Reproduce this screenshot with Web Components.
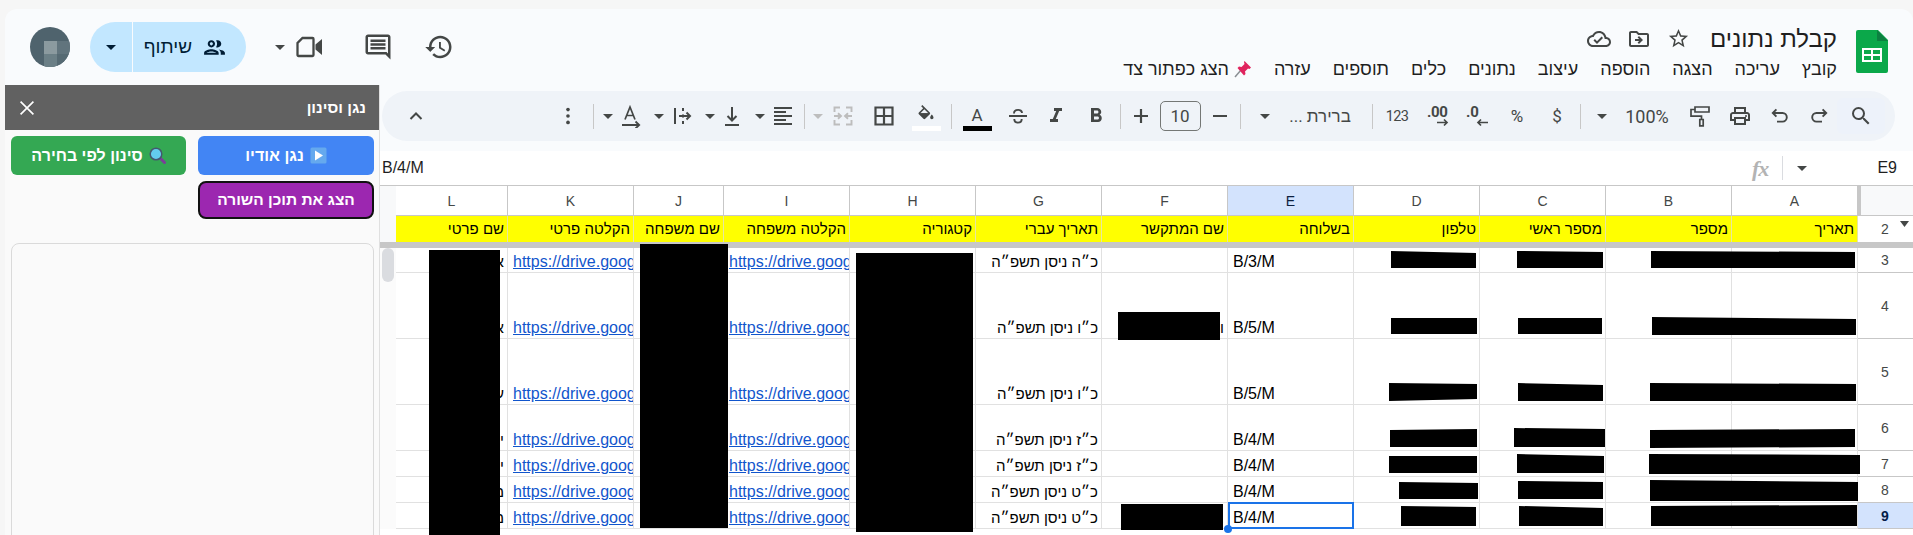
<!DOCTYPE html>
<html lang="he">
<head>
<meta charset="utf-8">
<title>קבלת נתונים</title>
<style>
    html, body { margin: 0; height: 535px; overflow: hidden; }
    body {
        position: relative;
        background: #f6f6f6;
        padding: 9px 0 0 5px;
        box-sizing: border-box;
        font-family: "Liberation Sans", Arial, sans-serif;
    }
</style>
</head>
<body>
<sheets-app></sheets-app>
<div id="marks"></div>

<script>
const svg = (size, inner, color = "#444746", vb = "0 0 24 24") =>
    `<svg width="${size}" height="${size}" viewBox="${vb}" fill="${color}" style="display:block">${inner}</svg>`;
const p = d => `<path d="${d}"/>`;
const line = (d, w = 1.9) => `<path d="${d}" fill="none" stroke="currentColor" stroke-width="${w}"/>`;

const ICONS = {
    search: p("M15.5 14h-.79l-.28-.27A6.471 6.471 0 0 0 16 9.5 6.5 6.5 0 1 0 9.5 16c1.61 0 3.09-.59 4.23-1.57l.27.28v.79l5 4.99L20.49 19l-4.99-5zm-6 0C7.01 14 5 11.99 5 9.5S7.01 5 9.5 5 14 7.01 14 9.5 11.99 14 9.5 14z"),
    redo: line("M19 9H9.5a4.3 4.3 0 0 0 0 8.6H15M15.6 5.4 19.2 9l-3.6 3.6"),
    undo: line("M5 9h9.5a4.3 4.3 0 0 1 0 8.6H9M8.4 5.4 4.8 9l3.6 3.6"),
    print: p("M19 8h-1V3H6v5H5c-1.66 0-3 1.34-3 3v6h4v4h12v-4h4v-6c0-1.66-1.34-3-3-3zM8 5h8v3H8V5zm8 14H8v-4h8v4zm2-4v-2H6v2H4v-4c0-.55.45-1 1-1h14c.55 0 1 .45 1 1v4h-2z") + `<circle cx="18" cy="12" r="1"/>`,
    paint: line("M7 3h14v5H7zM7 5.5H3v6.7h10.5v3.3M11.8 15.5h3.4v6.3h-3.4z", 1.7),
    strike: line("M3 12h18M8 9.5C8 4.8 16 4.8 16 9M8.3 15c0 4.8 7.4 4.8 7.4 0"),
    italic: p("M10 4v3h2.21l-3.42 8H6v3h8v-3h-2.21l3.42-8H18V4z"),
    bold: p("M15.6 10.79c.97-.67 1.65-1.77 1.65-2.79 0-2.26-1.75-4-4-4H7v14h7.04c2.09 0 3.71-1.7 3.71-3.79 0-1.52-.86-2.82-2.15-3.42zM10 6.5h3c.83 0 1.5.67 1.5 1.5s-.67 1.5-1.5 1.5h-3v-3zm3.5 9H10v-3h3.5c.83 0 1.5.67 1.5 1.5s-.67 1.5-1.5 1.5z"),
    plus: line("M12 5v14M5 12h14", 2.2),
    minus: line("M5 12h14", 2.2),
    fill: p("M16.56 8.94 7.62 0 6.21 1.41l2.38 2.38-5.15 5.15c-.59.59-.59 1.54 0 2.12l5.5 5.5c.29.29.68.44 1.06.44s.77-.15 1.06-.44l5.5-5.5c.59-.58.59-1.53 0-2.12zM5.21 10 10 5.21 14.79 10H5.21zM19 11.5s-2 2.17-2 3.5c0 1.1.9 2 2 2s2-.9 2-2c0-1.33-2-3.5-2-3.5z") + p("M4.5 10h11l-5.5 6z"),
    borders: line("M3.5 3.5h17v17h-17zM12 3.5v17M3.5 12h17", 2.2),
    merge: line("M3.5 8V3.5H9M15 3.5h5.5V8M3.5 16v4.5H9M15 20.5h5.5V16M3 12h6.5M7 9.2 10 12l-3 2.8M21 12h-6.5M17 9.2 14 12l3 2.8"),
    align: line("M3 4h18M3 8h12M3 12h18M3 16h12M3 20h18", 1.8),
    valign: line("M5 21h14M12 3v13M7.5 12 12 16.5l4.5-4.5", 2),
    wrap: line("M5 4v16M13 4v3M13 10.5v3M13 17v3M9 12h11M16.5 8.5 20 12l-3.5 3.5", 2),
    rotate: line("M3 21h17M16.5 17.5 20.2 21l-3.7 3.5", 1.8) + line("M6 15.5 11 3l5 12.5M7.6 11.5h6.8", 1.7),
    chevron: line("M6.5 15 12 9.5l5.5 5.5", 2),
    dots: `<circle cx="12" cy="5" r="2"/><circle cx="12" cy="12" r="2"/><circle cx="12" cy="19" r="2"/>`,
    comment: p("M21.99 4c0-1.1-.89-2-1.99-2H4c-1.1 0-2 .9-2 2v12c0 1.1.9 2 2 2h14l4 4-.01-18zM20 4v13.17L18.83 16H4V4h16zM6 12h12v2H6zm0-3h12v2H6zm0-3h12v2H6z"),
    history: p("M13 3c-4.97 0-9 4.03-9 9H1l3.89 3.89.07.14L9 12H6c0-3.87 3.13-7 7-7s7 3.13 7 7-3.13 7-7 7c-1.93 0-3.68-.79-4.94-2.06l-1.42 1.42C8.27 19.99 10.51 21 13 21c4.97 0 9-4.03 9-9s-4.03-9-9-9zm-1 5v5l4.28 2.54.72-1.21-3.5-2.08V8H12z"),
    people: p("M9 13.75c-2.34 0-7 1.17-7 3.5V19h14v-1.75c0-2.33-4.66-3.5-7-3.5zM4.34 17c.84-.58 2.87-1.25 4.66-1.25s3.82.67 4.66 1.25H4.34zM9 12c1.93 0 3.5-1.57 3.5-3.5S10.93 5 9 5 5.5 6.57 5.5 8.5 7.07 12 9 12zm0-5c.83 0 1.5.67 1.5 1.5S9.83 10 9 10s-1.5-.67-1.5-1.5S8.17 7 9 7zm7.04 6.81c1.16.84 1.96 1.96 1.96 3.44V19h4v-1.75c0-2.02-3.5-3.17-5.96-3.44zM15 12c1.93 0 3.5-1.57 3.5-3.5S16.93 5 15 5c-.54 0-1.04.13-1.5.35.63.89 1 1.98 1 3.15s-.37 2.26-1 3.15c.46.22.96.35 1.5.35z"),
    star: p("M22 9.24l-7.19-.62L12 2 9.19 8.63 2 9.24l5.46 4.73L5.82 21 12 17.27 18.18 21l-1.63-7.03L22 9.24zM12 15.4l-3.76 2.27 1-4.28-3.32-2.88 4.38-.38L12 6.1l1.71 4.04 4.38.38-3.32 2.88 1 4.28L12 15.4z"),
    move: p("M20 6h-8l-2-2H4c-1.1 0-1.99.9-1.99 2L2 18c0 1.1.9 2 2 2h16c1.1 0 2-.9 2-2V8c0-1.1-.9-2-2-2zm0 12H4V6h5.17l2 2H20v10zm-8.01-9-1.41 1.41L12.16 12H8v2h4.16l-1.59 1.59L11.99 17 16 13.01 11.99 9z"),
    cloud: p("M19.35 10.04C18.67 6.59 15.64 4 12 4 9.11 4 6.6 5.64 5.35 8.04 2.34 8.36 0 10.91 0 14c0 3.31 2.69 6 6 6h13c2.76 0 5-2.24 5-5 0-2.64-2.05-4.78-4.65-4.96zM19 18H6c-2.21 0-4-1.79-4-4 0-2.05 1.53-3.76 3.56-3.97l1.07-.11.5-.95C8.08 7.14 9.94 6 12 6c2.62 0 4.88 1.86 5.39 4.43l.3 1.5 1.53.11c1.56.1 2.78 1.41 2.78 2.96 0 1.65-1.35 3-3 3zm-9-3.82-2.09-2.09L6.5 13.5 10 17l6.01-6.01-1.41-1.41z"),
    close: line("M5 5l14 14M19 5 5 19", 1.8)
};

const CARET = `<svg width="10" height="5" viewBox="0 0 10 5" style="display:block"><path d="M0 0h10L5 5z" fill="currentColor"/></svg>`;

class SheetsApp extends HTMLElement {
    constructor() {
        super();
        this.attachShadow({ mode: "open" });
    }

    connectedCallback() {
        this.shadowRoot.innerHTML = `
        <style>
            :host {
                display: block;
                height: 526px;
                background: #f9fbfd;
                border-radius: 12px 12px 0 0;
                overflow: hidden;
            }
            .body { display: flex; }
            .main { flex: 1; min-width: 0; }
        </style>
        <app-header></app-header>
        <div class="body">
            <side-panel></side-panel>
            <div class="main">
                <sheet-toolbar></sheet-toolbar>
                <formula-bar></formula-bar>
                <sheet-grid></sheet-grid>
            </div>
        </div>`;
    }
}
customElements.define("sheets-app", SheetsApp);

class AppHeader extends HTMLElement {
    constructor() {
        super();
        this.attachShadow({ mode: "open" });
    }

    connectedCallback() {
        const menu = ["קובץ", "עריכה", "הצגה", "הוספה", "עיצוב", "נתונים", "כלים", "תוספים", "עזרה"];
        this.shadowRoot.innerHTML = `
        <style>
            :host {
                display: flex;
                justify-content: space-between;
                height: 76px;
                color: #444746;
            }
            .actions { display: flex; align-items: center; padding: 0 0 0 25px; height: 78px; margin-top: -1px; }
            .avatar { display: block; width: 40px; height: 40px; }
            .share {
                display: flex;
                align-items: center;
                height: 50px;
                width: 156px;
                margin-left: 20px;
                border-radius: 25px;
                background: #c2e7ff;
                color: #001d35;
                overflow: hidden;
            }
            .share .drop { width: 42px; height: 100%; display: flex; align-items: center; justify-content: center; border-right: 1px solid #f9fbfd; }
            .share .main { flex: 1; display: flex; align-items: center; justify-content: flex-end; gap: 10px; padding-right: 19px; font-size: 19px; }
            .meet { display: flex; align-items: center; margin-left: 29px; gap: 10px; }
            .comment { margin-left: 40px; }
            .history { margin-left: 31px; }
            .doc { display: flex; padding: 21px 25px 0 0; gap: 19px; }
            .info { display: flex; flex-direction: column; align-items: flex-end; }
            .title-row { display: flex; align-items: center; gap: 20px; height: 24px; margin-top: -3px; }
            .title { font-size: 24px; color: #1f1f1f; line-height: 24px; }
            .title-icons { display: flex; gap: 16px; }
            .menu { display: flex; flex-direction: row-reverse; gap: 22px; font-size: 18px; line-height: 20px; color: #1f1f1f; margin-top: 8px; }
            .menu span { white-space: nowrap; }
            .pinned { display: flex; gap: 5px; align-items: center; }
        </style>
        <div class="actions">
            <svg class="avatar" viewBox="0 0 40 40">
                <clipPath id="av"><circle cx="20" cy="20" r="20"/></clipPath>
                <g clip-path="url(#av)">
                    <rect width="40" height="40" fill="#4f636d"/>
                    <rect x="14" y="14" width="13" height="13" fill="#8b9a9f"/>
                    <rect x="27" y="14" width="13" height="13" fill="#61747d"/>
                    <rect x="14" y="27" width="13" height="13" fill="#6b7f86"/>
                    <rect x="27" y="27" width="13" height="13" fill="#566a73"/>
                </g>
            </svg>
            <div class="share" dir="ltr">
                <div class="drop">${CARET}</div>
                <div class="main"><span dir="rtl">שיתוף</span>${svg(25, ICONS.people, "#001d35")}</div>
            </div>
            <div class="meet">
                ${CARET}
                <svg width="28" height="22" viewBox="0 0 27 22" fill="none" style="display:block">
                    <path d="M7 2h10a1 1 0 0 1 1 1v16a1 1 0 0 1-1 1H3a1 1 0 0 1-1-1V7z" stroke="#444746" stroke-width="2.3"/>
                    <path d="M20 8.5 26.5 3v16L20 13.5z" fill="#444746"/>
                </svg>
            </div>
            <div class="comment">${svg(30, ICONS.comment)}</div>
            <div class="history">${svg(30, ICONS.history)}</div>
        </div>
        <div class="doc">
            <div class="info">
                <div class="title-row">
                    <div class="title-icons">${svg(24, ICONS.cloud)}${svg(24, ICONS.move)}${svg(23, ICONS.star)}</div>
                    <span class="title" dir="rtl">קבלת נתונים</span>
                </div>
                <div class="menu">
                    ${menu.map(m => `<span>${m}</span>`).join("")}
                    <span class="pinned" dir="rtl">
                        <svg width="18" height="18" viewBox="0 0 18 18" style="display:block">
                            <path d="M1 17 7 10" stroke="#8a8f94" stroke-width="1.5"/>
                            <path d="M10.5 1 17 7.5 15.5 9 14 8.5 11 11.5 11.5 14 10 15.5 3.5 8 5 6.5 7.5 7 10.5 4 10 2z" fill="#e0245e"/>
                        </svg>
                        <span>הצג כפתור צד</span>
                    </span>
                </div>
            </div>
            <svg width="32" height="43" viewBox="0 0 32 43" style="display:block">
                <path d="M2 0h20l10 10v31a2 2 0 0 1-2 2H2a2 2 0 0 1-2-2V2a2 2 0 0 1 2-2z" fill="#0ba84a"/>
                <path d="M21 0l11 11H21z" fill="#0c8040"/>
                <path d="M6 18h20v14H6z" fill="#fff"/>
                <path d="M8 20h7v4H8zM17 20h7v4h-7zM8 26h7v4H8zM17 26h7v4h-7z" fill="#0ba84a"/>
            </svg>
        </div>`;
    }
}
customElements.define("app-header", AppHeader);

class SidePanel extends HTMLElement {
    constructor() {
        super();
        this.attachShadow({ mode: "open" });
    }

    connectedCallback() {
        this.shadowRoot.innerHTML = `
        <style>
            :host {
                display: flex;
                flex-direction: column;
                flex: none;
                width: 375px;
                height: 450px;
                background: #fafafa;
                border-right: 1px solid #e0e0e0;
                box-sizing: border-box;
                overflow: hidden;
            }
            .bar {
                display: flex;
                justify-content: space-between;
                align-items: center;
                height: 45px;
                flex: none;
                padding: 0 13px 0 11px;
                background: #616161;
                color: #fff;
                font-size: 15.5px;
                font-weight: bold;
            }
            .buttons {
                display: grid;
                grid-template-columns: 175px 176px;
                column-gap: 12px;
                row-gap: 6px;
                padding: 6px 5px 0 6px;
                flex: none;
            }
            button {
                display: flex;
                align-items: center;
                justify-content: center;
                gap: 6px;
                height: 39px;
                padding: 0;
                border: 0;
                border-radius: 6px;
                color: #fff;
                font: bold 16px "Liberation Sans", Arial, sans-serif;
            }
            .blue { background: #4285f4; }
            .green { background: #34a853; }
            .purple {
                grid-column: 2;
                height: 38px;
                background: #9c27b0;
                border: 2px solid #111;
                border-radius: 8px;
                box-sizing: border-box;
                font-size: 15.5px;
            }
            .box {
                flex: 1;
                margin: 24px 5px 0 6px;
                background: #fafafa;
                border: 1px solid #dadada;
                border-radius: 8px;
                min-height: 320px;
            }
        </style>
        <div class="bar">
            ${svg(22, ICONS.close, "#fff")}
            <span dir="rtl">נגן וסינון</span>
        </div>
        <div class="buttons">
            <button class="green" dir="rtl">
                <svg width="17" height="17" viewBox="0 0 17 17" style="display:block">
                    <path d="M10.5 10.5 15.5 15.5" stroke="#7b3f98" stroke-width="3" stroke-linecap="round"/>
                    <circle cx="7" cy="7" r="5.8" fill="#63cdee" stroke="#44596e" stroke-width="1.5"/>
                </svg>
                <span>סינון לפי בחירה</span>
            </button>
            <button class="blue" dir="rtl">
                <svg width="17" height="17" viewBox="0 0 17 17" style="display:block">
                    <rect x=".5" y=".5" width="16" height="16" rx="1.5" fill="#65a9ee"/>
                    <path d="M5 3.5 13 8.5 5 13.5z" fill="#fff"/>
                </svg>
                <span>נגן אודיו</span>
            </button>
            <button class="purple" dir="rtl"><span>הצג את תוכן השורה</span></button>
        </div>
        <div class="box"></div>`;
    }
}
customElements.define("side-panel", SidePanel);

class SheetToolbar extends HTMLElement {
    constructor() {
        super();
        this.attachShadow({ mode: "open" });
    }

    connectedCallback() {
        const sep = `<i class="sep"></i>`;
        const caret = CARET;
        const ic = (name, size = 24) => svg(size, ICONS[name], "currentColor");
        // centre of each control along the bar, left to right
        const items = [
            [568, 24, ic("dots", 22)],
            [593, 1, sep], [608, 10, caret],
            [631, 24, ic("rotate")], [659, 10, caret],
            [682, 24, ic("wrap")], [710, 10, caret],
            [732, 24, ic("valign")], [760, 10, caret],
            [783, 24, ic("align")], [804.5, 1, sep],
            [817.5, 10, `<span class="off">${caret}</span>`],
            [843, 24, `<span class="off">${ic("merge")}</span>`],
            [884, 24, ic("borders")],
            [926, 29, `<div class="swatch">${ic("fill", 20)}<b style="background:#fff"></b></div>`],
            [951, 1, sep],
            [977, 29, `<div class="swatch"><span class="a">A</span><b style="background:#000"></b></div>`],
            [1017.5, 24, ic("strike")], [1056, 24, ic("italic")], [1095.5, 24, ic("bold")],
            [1120, 1, sep], [1141, 24, ic("plus")],
            [1180, 41, `<div class="size">10</div>`],
            [1220, 24, ic("minus")], [1240, 1, sep], [1264.5, 10, caret],
            [1320, 66, `<span dir="rtl" style="font-size:17px">ברירת ...</span>`],
            [1372, 1, sep],
            [1397, 24, `<span style="font-size:14.5px;letter-spacing:-.6px">123</span>`],
            [1438, 24, `<svg width="24" height="24" viewBox="0 0 24 24" style="display:block;overflow:visible"><text x="1" y="13" font-family="Roboto" font-weight="700" font-size="15" fill="currentColor" letter-spacing="-.4">.00</text><path d="M11 18.5h10M18 15.5l3 3-3 3" fill="none" stroke="currentColor" stroke-width="1.7"/></svg>`],
            [1477, 24, `<svg width="24" height="24" viewBox="0 0 24 24" style="display:block;overflow:visible"><text x="1" y="13" font-family="Roboto" font-weight="700" font-size="15" fill="currentColor">.0</text><path d="M23 18.5H13M16 15.5l-3 3 3 3" fill="none" stroke="currentColor" stroke-width="1.7"/></svg>`],
            [1517, 20, `<span style="font-size:17px">%</span>`],
            [1557, 16, `<span style="font-size:17px">$</span>`],
            [1580, 1, sep], [1602, 10, caret],
            [1647, 46, `<span style="font-size:18px">100%</span>`],
            [1700, 24, ic("paint")], [1740, 24, ic("print")], [1780, 24, ic("undo")], [1819, 24, ic("redo")]
        ];
        let prev = 450;
        const cells = items.map(([c, w, html]) => {
            const left = c - w / 2 - prev;
            prev = c + w / 2;
            return `<div class="item" style="width:${w}px;margin-left:${left}px">${html}</div>`;
        }).join("");
        this.shadowRoot.innerHTML = `
        <style>
            :host { display: block; padding: 6px 18px 10px 2px; }
            .pill {
                display: flex;
                align-items: center;
                height: 50px;
                border-radius: 25px;
                background: #eff3f8;
                color: #444746;
                font-family: Roboto, "Liberation Sans", sans-serif;
            }
            .up { width: 68px; display: flex; justify-content: center; flex: none; }
            .item { display: flex; justify-content: center; align-items: center; flex: none; white-space: nowrap; }
            .sep { display: block; width: 1px; height: 25px; background: #c7c7c7; }
            .off { color: #bdbdbd; display: block; }
            .swatch { display: flex; flex-direction: column; align-items: center; width: 29px; height: 28px; justify-content: flex-end; margin-top: 1px; }
            .swatch b { display: block; width: 29px; height: 5px; flex: none; margin-top: 1px; }
            .a { font-size: 17px; line-height: 20px; }
            .size {
                width: 41px;
                height: 30px;
                box-sizing: border-box;
                border: 1px solid #747775;
                border-radius: 5px;
                text-align: center;
                font-size: 17px;
                line-height: 28px;
            }
            .search { margin-left: auto; width: 48px; height: 36px; margin-right: 10px; border-radius: 6px; background: #edf2fa; display: flex; align-items: center; justify-content: center; flex: none; }
        </style>
        <div class="pill">
            <div class="up">${ic("chevron")}</div>
            ${cells}
            <div class="search">${ic("search")}</div>
        </div>`;
    }
}
customElements.define("sheet-toolbar", SheetToolbar);

class FormulaBar extends HTMLElement {
    constructor() {
        super();
        this.attachShadow({ mode: "open" });
    }

    connectedCallback() {
        this.shadowRoot.innerHTML = `
        <style>
            :host {
                display: flex;
                align-items: center;
                height: 35px;
                background: #fff;
                border-bottom: 1px solid #c7c7c7;
                box-sizing: border-box;
                color: #1f1f1f;
                font-size: 16px;
            }
            .value { flex: 1; padding-left: 2px; }
            .fx { font: italic bold 22px "Liberation Serif", serif; color: #b3b3b3; width: 26px; letter-spacing: -1px; margin-top: 1px; }
            .rule { width: 1px; height: 24px; background: #dadce0; margin-left: 4px; }
            .drop { width: 38px; display: flex; justify-content: center; color: #444746; }
            .ref { width: 92px; box-sizing: border-box; text-align: right; padding-right: 16px; }
        </style>
        <div class="value">B/4/M</div>
        <span class="fx">fx</span>
        <i class="rule"></i>
        <div class="drop">${CARET}</div>
        <div class="ref">E9</div>`;
    }
}
customElements.define("formula-bar", FormulaBar);

class SheetGrid extends HTMLElement {
    constructor() {
        super();
        this.attachShadow({ mode: "open" });
    }

    connectedCallback() {
        const letters = ["L", "K", "J", "I", "H", "G", "F", "E", "D", "C", "B", "A"];
        const heads = ["שם פרטי", "הקלטה פרטי", "שם משפחה", "הקלטה משפחה", "קטגוריה", "תאריך עברי", "שם המתקשר", "בשלוחה", "טלפון", "מספר ראשי", "מספר", "תאריך"];
        const rows = [
            { n: 3, l: "א", date: "כ״ה ניסן תשפ״ה", ext: "B/3/M" },
            { n: 4, l: "א", date: "כ״ו ניסן תשפ״ה", ext: "B/5/M", f: "ו" },
            { n: 5, l: "ע", date: "כ״ו ניסן תשפ״ה", ext: "B/5/M" },
            { n: 6, l: "י", date: "כ״ז ניסן תשפ״ה", ext: "B/4/M" },
            { n: 7, l: "י", date: "כ״ז ניסן תשפ״ה", ext: "B/4/M" },
            { n: 8, l: "מ", date: "כ״ט ניסן תשפ״ה", ext: "B/4/M" },
            { n: 9, l: "מ", date: "כ״ט ניסן תשפ״ה", ext: "B/4/M", f: ".", active: true }
        ];
        const link = `<a>https://drive.goog</a>`;
        const rowCells = r => `
            <div class="c he">${r.l}</div>
            <div class="c">${link}</div>
            <div class="c"></div>
            <div class="c">${link}</div>
            <div class="c"></div>
            <div class="c he">${r.date}</div>
            <div class="c he">${r.f || ""}</div>
            <div class="c${r.active ? " active" : ""}">${r.ext}${r.active ? `<i class="sel"></i><i class="handle"></i>` : ""}</div>
            <div class="c"></div><div class="c"></div><div class="c"></div><div class="c"></div>
            <div class="num${r.active ? " on" : ""}">${r.n}</div>`;
        this.shadowRoot.innerHTML = `
        <style>
            :host {
                display: grid;
                grid-template-columns: 16px 112px 126px 90px repeat(9, 126px) 55px;
                grid-template-rows: 30px 26px 6px 25px 66px 66px 46px 26px 26px 26px;
                background: #fff;
                font: 16px "Liberation Sans", Arial, sans-serif;
                color: #000;
                height: 349px;
            }
            .gut { background: #f8f9fa; }
            .gut.data { grid-column: 1; grid-row: 4 / 11; position: relative; background: #fbfbfb; }
            .thumb { position: absolute; left: 2px; top: 0; width: 12px; height: 34px; border-radius: 6px; background: #dadce0; }
            .col {
                display: flex; align-items: center; justify-content: center;
                border-right: 1px solid #c7c7c7;
                border-bottom: 1px solid #c7c7c7;
                color: #444746;
                font-size: 14px;
                padding-top: 1px;
            }
            .col.on { background: #d3e3fd; color: #0b1f3f; }
            .corner { background: #f8f9fa; border-left: 3px solid #c7c7c7; border-bottom: 1px solid #c7c7c7; }
            .h {
                background: #ff0;
                border-right: 1px solid #e6e6a0;
                padding: 0 3px 0 0;
                font-size: 15px;
                line-height: 26px;
                text-align: right;
                white-space: nowrap;
                overflow: hidden;
            }
            .freeze { grid-column: 1 / -1; background: #c7c7c7; }
            .c {
                position: relative;
                display: flex;
                align-items: flex-end;
                border-right: 1px solid #e1e1e1;
                border-bottom: 1px solid #e1e1e1;
                padding: 0 3px 1px 5px;
                box-sizing: border-box;
                white-space: nowrap;
                overflow: hidden;
                line-height: 18px;
            }
            .he { direction: rtl; font-size: 15px; padding: 0 3px 1px 3px; }
            a { color: #1155cc; text-decoration: underline; }
            .num {
                display: flex; align-items: center; justify-content: center;
                border-bottom: 1px solid #c7c7c7;
                color: #444746;
                font-size: 14px;
                padding-right: 1px;
                box-sizing: border-box;
            }
            .num.on { background: #d3e3fd; color: #041e49; font-weight: bold; }
            .num.two { position: relative; border-bottom: 0; }
            .sort { position: absolute; right: 4px; top: 5px; color: #444746; }
            .active { overflow: visible; z-index: 1; }
            .sel { position: absolute; left: 0; top: -1px; right: -1px; bottom: -1px; border: 2px solid #1a73e8; }
            .handle { position: absolute; left: -4px; bottom: -5px; width: 8px; height: 8px; border-radius: 50%; background: #1a73e8; }
        </style>
        <div class="gut"></div>
        ${letters.map(l => `<div class="col${l === "E" ? " on" : ""}">${l}</div>`).join("")}
        <div class="corner"></div>
        <div class="gut"></div>
        ${heads.map(h => `<div class="h" dir="rtl">${h}</div>`).join("")}
        <div class="num two">2<span class="sort"><svg width="9" height="6" viewBox="0 0 9 6" style="display:block"><path d="M0 0h9L4.5 6z" fill="currentColor"/></svg></span></div>
        <div class="freeze"></div>
        <div class="gut data"><div class="thumb"></div></div>
        ${rows.map(rowCells).join("")}`;
    }
}
customElements.define("sheet-grid", SheetGrid);

// black bars painted over the private data: x1 y1 x2 y2 in page pixels,
// then optional corner insets (top-left, top-right, bottom-right, bottom-left) for the hand-drawn slant
class RedactMark extends HTMLElement {
    constructor() {
        super();
        this.attachShadow({ mode: "open" });
    }

    connectedCallback() {
        const [x1, y1, x2, y2, tl = 0, tr = 0, br = 0, bl = 0] = this.getAttribute("box").split(" ").map(Number);
        const w = x2 - x1, h = y2 - y1;
        this.shadowRoot.innerHTML = `
        <style>
            :host {
                position: absolute;
                left: ${x1}px;
                top: ${y1}px;
                width: ${w}px;
                height: ${h}px;
                background: #000;
                clip-path: polygon(0 ${tl}px, ${w}px ${tr}px, ${w}px ${h - br}px, 0 ${h - bl}px);
            }
        </style>`;
    }
}
customElements.define("redact-mark", RedactMark);

const marks = [
    "429 250 500 535", "640 244 728 528", "856 253 973 532",
    "1391 251 1476 268 0 2", "1517 251 1603 268 0 1", "1651 251 1855 268 0 1",
    "1118 312 1220 340", "1391 318 1477 334", "1518 318 1602 334", "1652 317 1856 335 0 2",
    "1389 383 1477 401 0 1 2 0", "1518 383 1603 401 0 2", "1650 383 1856 401 0 1",
    "1390 429 1477 447 1 0", "1514 428 1605 447 0 1", "1650 429 1855 448 1 0 1 0",
    "1389 456 1477 473", "1517 454 1604 473 0 2", "1649 454 1860 474 0 1",
    "1399 482 1478 499 0 1", "1518 481 1603 499 0 1", "1650 480 1858 501 0 2",
    "1121 504 1223 530", "1401 506 1476 526 0 1", "1519 506 1603 526 0 2", "1651 505 1857 526 1 0"
];
document.getElementById("marks").innerHTML = marks.map(b => `<redact-mark box="${b}"></redact-mark>`).join("");
</script>
</body>
</html>
